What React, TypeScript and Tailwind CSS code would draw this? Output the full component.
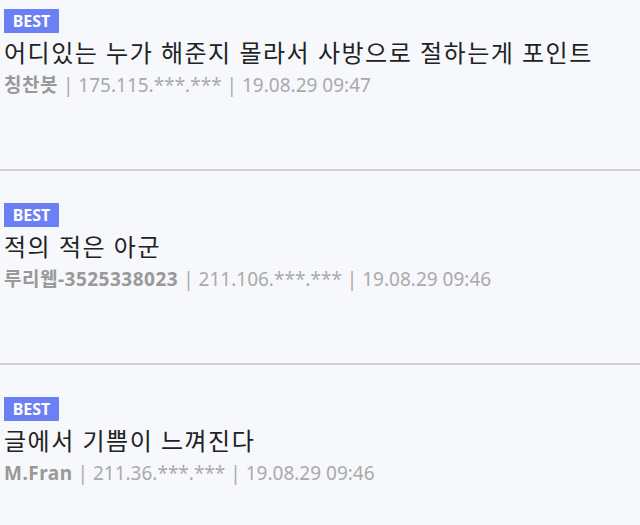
import React from 'react';

type Comment = {
  text: string;
  name: string;
  ip: string;
  date: string;
};

const comments: Comment[] = [
  { text: '어디있는 누가 해준지 몰라서 사방으로 절하는게 포인트', name: '칭찬봇', ip: '175.115.***.***', date: '19.08.29 09:47' },
  { text: '적의 적은 아군', name: '루리웹-3525338023', ip: '211.106.***.***', date: '19.08.29 09:46' },
  { text: '글에서 기쁨이 느껴진다', name: 'M.Fran', ip: '211.36.***.***', date: '19.08.29 09:46' },
];

const App: React.FC = () => {
  return (
    <div
      className="w-[640px] h-[525px] overflow-hidden bg-[#f6f8fc]"
      style={{ fontFamily: '"Noto Sans", "Noto Sans CJK KR", sans-serif' }}
    >
      <div className="-mt-[23px]">
        {comments.map((c, i) => (
          <div key={i} className="h-[194px] pt-8 px-1 border-b-2 border-[#d1d1d4]">
            {/* badge */}
            <div className="w-[55px] h-[24px] bg-[#6c80f5] text-white text-[16px] font-bold flex items-center justify-center leading-none">
              BEST
            </div>
            {/* comment */}
            <p className="mt-[3px] text-[24px] leading-[34px] tracking-[1.5px] text-[#222]">{c.text}</p>
            {/* meta */}
            <p className="text-[19px] leading-[30px] text-[#aaa]">
              <span className="font-bold text-[#999] tracking-[0.5px]">{c.name}</span>
              <span> | {c.ip} | {c.date}</span>
            </p>
          </div>
        ))}
      </div>
    </div>
  );
};

export default App;
